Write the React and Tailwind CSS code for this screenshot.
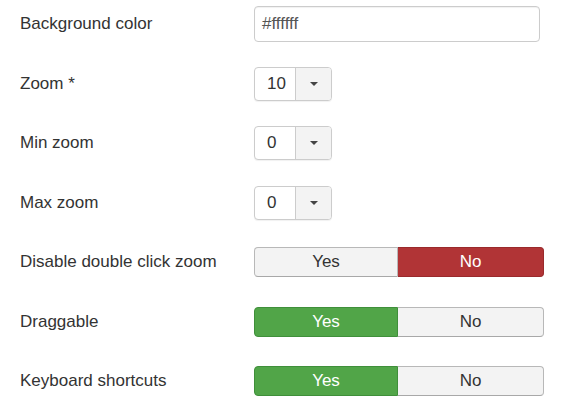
const font = { fontFamily: '"Liberation Sans", Arial, sans-serif' };

function Row({ label, children }) {
  return (
    <div className="flex h-[36px] items-center">
      <div className="w-[254px] shrink-0 pl-[20px] text-[17px] text-[#333]">{label}</div>
      <div className="flex items-center">{children}</div>
    </div>
  );
}

function Select({ value }) {
  return (
    <div className="flex h-[34px] w-[78px] overflow-hidden rounded-[4px] border border-[#ccc] bg-white shadow-[0_1px_1px_rgba(0,0,0,0.06)]">
      <div className="flex w-[40px] items-center pl-[12px] text-[17px] text-[#333]">{value}</div>
      <div className="flex flex-1 items-center justify-center border-l border-[#ccc] bg-[#f3f3f3]">
        <span className="h-0 w-0 border-x-[4px] border-t-[4px] border-x-transparent border-t-[#444]" />
      </div>
    </div>
  );
}

function Toggle({ yes }) {
  const off = "bg-[#f3f3f3] text-[#333] border-[#b8b8b8] border-b-[#a8a8a8]";
  return (
    <div className="flex h-[30px] w-[290px] text-[17px]">
      <div
        className={
          "flex w-[144px] items-center justify-center rounded-l-[4px] border " +
          (yes ? "border-[#3f8f3a] bg-[#51a548] text-white" : off)
        }
      >
        Yes
      </div>
      <div
        className={
          "flex flex-1 items-center justify-center rounded-r-[4px] border border-l-0 " +
          (yes ? off : "border-[#9a2a2c] bg-[#b13436] text-white")
        }
      >
        No
      </div>
    </div>
  );
}

export default function App() {
  return (
    <div className="min-h-[405px] w-[566px] bg-white pt-[6px]" style={font}>
      <div className="flex flex-col gap-[23.5px]">
        <Row label="Background color">
          <div className="flex h-[36px] w-[286px] items-center rounded-[4px] border border-[#ccc] pl-[7px] text-[17px] text-[#555] shadow-[inset_0_1px_1px_rgba(0,0,0,0.06)]">
            #ffffff
          </div>
        </Row>
        <Row label="Zoom *">
          <Select value="10" />
        </Row>
        <Row label="Min zoom">
          <Select value="0" />
        </Row>
        <Row label="Max zoom">
          <Select value="0" />
        </Row>
        <Row label="Disable double click zoom">
          <Toggle yes={false} />
        </Row>
        <Row label="Draggable">
          <Toggle yes />
        </Row>
        <Row label="Keyboard shortcuts">
          <Toggle yes />
        </Row>
      </div>
    </div>
  );
}
